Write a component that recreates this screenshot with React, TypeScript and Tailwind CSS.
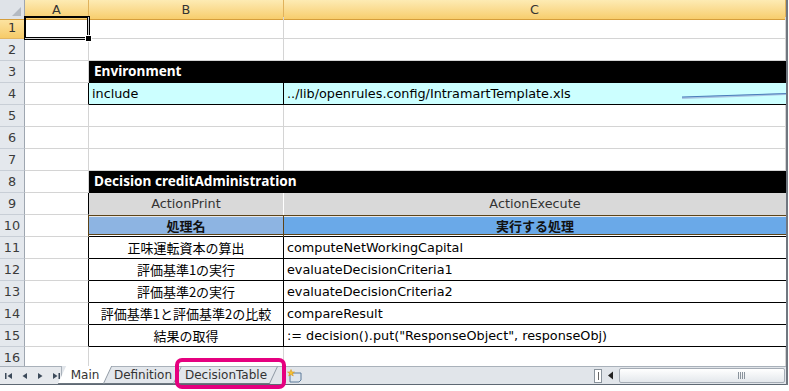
import React from 'react'

const GRID = 'grid grid-cols-[25px_64px_195px_502px]'
const GL = 'border-r border-b border-r-[#d4d4d4] border-b-[#d4d4d4]'
// Meiryo-like latin text, Japanese falls through to Noto CJK
const LATIN = 'font-[DejaVu_Sans,Noto_Sans_CJK_JP,sans-serif] text-[12.8px]'
const BOLD = 'font-[Noto_Sans,Noto_Sans_CJK_JP,sans-serif] text-[13.6px] font-bold'
const JP = 'font-[Noto_Sans_CJK_JP,sans-serif] text-[13px]'

type RowProps = {
  n: number
  selected?: boolean
  children?: React.ReactNode
  aCls?: string
}

function RowHead({ n, selected }: { n: number; selected?: boolean }) {
  return (
    <div
      className={
        'flex items-center justify-center border-r border-b ' +
        LATIN +
        (selected
          ? ' bg-gradient-to-b from-[#fde7a9] to-[#f6cb68] border-r-[#d9a441] border-b-[#e3b662] text-[#333]'
          : ' bg-[#e4e8ed] border-r-[#9ea6b0] border-b-[#c8ced6] text-[#3b3b3b]')
      }
    >
      {n}
    </div>
  )
}

function Row({ n, selected, children, aCls }: RowProps) {
  return (
    <div className={GRID + ' h-[22px]'}>
      <RowHead n={n} selected={selected} />
      <div className={'border-r border-b border-b-[#d4d4d4] ' + (aCls ?? 'border-r-[#d4d4d4]')} />
      {children ?? (
        <>
          <div className={GL} />
          <div className={GL} />
        </>
      )}
    </div>
  )
}

const tableRows = [
  { n: 11, b: '正味運転資本の算出', c: 'computeNetWorkingCapital' },
  { n: 12, b: '評価基準1の実行', c: 'evaluateDecisionCriteria1' },
  { n: 13, b: '評価基準2の実行', c: 'evaluateDecisionCriteria2' },
  { n: 14, b: '評価基準1と評価基準2の比較', c: 'compareResult' },
  { n: 15, b: '結果の取得', c: ':= decision().put("ResponseObject", responseObj)' },
]

function ColHead({ label }: { label: string }) {
  return (
    <div className={'flex items-center justify-center bg-gradient-to-b from-[#fdebb3] to-[#f7cd6c] border-r border-b border-r-[#e0b25c] border-b-[#d59e3c] text-[#333] ' + LATIN}>
      {label}
    </div>
  )
}

function Tab({ label, active, w }: { label: string; active?: boolean; w: string }) {
  return (
    <div className={'relative h-full flex items-center justify-center ' + w + (active ? ' z-10' : '')}>
      <div
        className={
          'absolute inset-0 -skew-x-[25deg] border-r border-b ' +
          (active
            ? 'bg-white border-r-[#8e98a3] border-b-[#6d7780]'
            : 'bg-[#e3e7ec] border-r-[#8e98a3] border-b-[#6d7780] border-t border-t-[#a9b1ba]')
        }
      />
      <span className="relative font-[DejaVu_Sans,sans-serif] text-[12px] text-[#333] leading-none">{label}</span>
    </div>
  )
}

export default function App() {
  return (
    <div className="relative w-[789px] h-[391px] bg-white overflow-hidden font-[DejaVu_Sans,Noto_Sans_CJK_JP,sans-serif]">
      <div className="w-[788px] h-[385px] border-r-2 border-r-[#707780] flex flex-col">
        <div className="relative h-[366px] overflow-hidden">
          {/* column headers */}
          <div className={GRID + ' h-[17px]'}>
            <div className="relative bg-[#dfe3e8] border-r border-b border-r-[#9ea6b0] border-b-[#d59e3c]">
              <svg className="absolute right-[3px] bottom-[3px]" width="9" height="9" viewBox="0 0 9 9">
                <path d="M9 0 L9 9 L0 9 Z" fill="#b4bac2" />
              </svg>
            </div>
            <ColHead label="A" />
            <ColHead label="B" />
            <ColHead label="C" />
          </div>

          {/* row 1 with selected A1 */}
          <div className={GRID + ' h-[22px]'}>
            <RowHead n={1} selected />
            <div className="relative border-r border-b border-r-[#d4d4d4] border-b-[#d4d4d4] shadow-[0_0_0_1px_#000,inset_0_0_0_1px_#000]">
              <div className="absolute -right-[3px] -bottom-[3px] w-[5px] h-[5px] bg-black outline outline-1 outline-white" />
            </div>
            <div className={GL} />
            <div className={GL} />
          </div>
          <Row n={2} />
          <Row n={3}>
            <div className={'col-span-2 bg-black border-b border-b-black flex items-center pl-[5px] text-white ' + BOLD}>
              Environment
            </div>
          </Row>
          <Row n={4} aCls="border-r-black">
            <div className={'bg-[#ccffff] border-r border-b border-black flex items-center pl-[3px] text-black ' + LATIN}>include</div>
            <div className={'bg-[#ccffff] border-b border-b-black flex items-center pl-[3px] text-black ' + LATIN}>
              ../lib/openrules.config/IntramartTemplate.xls
            </div>
          </Row>
          <Row n={5} />
          <Row n={6} />
          <Row n={7} />
          <Row n={8}>
            <div className={'col-span-2 bg-black border-b border-b-black flex items-center pl-[5px] text-white ' + BOLD}>
              Decision creditAdministration
            </div>
          </Row>
          <Row n={9} aCls="border-r-black">
            <div className={'bg-[#d9d9d9] border-r border-r-white flex items-center justify-center text-[#333] ' + LATIN}>ActionPrint</div>
            <div className={'bg-[#d9d9d9] flex items-center justify-center text-[#333] ' + LATIN}>ActionExecute</div>
          </Row>
          <Row n={10} aCls="border-r-[#5c4318]">
            <div className={'bg-[#8db4e2] border-r border-r-[#5c4318] shadow-[inset_0_1px_0_#5c4318,inset_0_2px_0_#e8e8e8,inset_0_-1px_0_#000,inset_0_-2px_0_#fff,inset_0_-3px_0_#5c4318] flex items-center justify-center font-bold text-[#111] ' + JP}>
              処理名
            </div>
            <div className={'bg-[#6aa9e8] shadow-[inset_0_1px_0_#5c4318,inset_0_2px_0_#e8e8e8,inset_0_-1px_0_#000,inset_0_-2px_0_#fff,inset_0_-3px_0_#5c4318] flex items-center justify-center font-bold text-[#111] ' + JP}>
              実行する処理
            </div>
          </Row>
          {tableRows.map((r) => (
            <Row key={r.n} n={r.n} aCls="border-r-black">
              <div className={'bg-white border-r border-b border-black flex items-center justify-center text-black whitespace-nowrap ' + JP}>{r.b}</div>
              <div className={'bg-white border-b border-b-black flex items-center pl-[3px] text-black whitespace-nowrap ' + LATIN}>{r.c}</div>
            </Row>
          ))}
          <Row n={16} />

          {/* drawing line in row 4 */}
          <svg className="absolute left-[682px] top-[91px]" width="106" height="9" viewBox="0 0 106 9">
            <line x1="0" y1="7" x2="106" y2="3" stroke="#a9c4e2" strokeWidth="2" />
            <line x1="0" y1="6" x2="106" y2="2.5" stroke="#4a7ebb" strokeWidth="1" />
          </svg>
        </div>

        {/* sheet tab strip */}
        <div className="relative flex h-[19px] bg-[#e1e5ea] border-b border-b-[#5e6873]">
          <div className="w-[62px] h-full flex items-center gap-[9px] pl-[5px] border-t border-r border-t-[#a9b1ba] border-r-[#a9b1ba] bg-[#e6e9ed]">
            <svg width="8" height="8" viewBox="0 0 8 8"><rect x="0" y="1" width="1.5" height="6" fill="#3c4a5a" /><path d="M7 1 L2.5 4 L7 7 Z" fill="#3c4a5a" /></svg>
            <svg width="6" height="8" viewBox="0 0 6 8"><path d="M5 1 L0.5 4 L5 7 Z" fill="#3c4a5a" /></svg>
            <svg width="6" height="8" viewBox="0 0 6 8"><path d="M1 1 L5.5 4 L1 7 Z" fill="#3c4a5a" /></svg>
            <svg width="8" height="8" viewBox="0 0 8 8"><path d="M1 1 L5.5 4 L1 7 Z" fill="#3c4a5a" /><rect x="6.5" y="1" width="1.5" height="6" fill="#3c4a5a" /></svg>
          </div>
          <div className="flex h-full">
            <Tab label="Main" active w="w-[46px]" />
            <Tab label="Definition" w="w-[70px]" />
            <Tab label="DecisionTable" w="w-[96px]" />
          </div>
          <div className="flex items-center pl-[13px] border-t border-t-[#a9b1ba] w-[320px]">
            <svg width="17" height="14" viewBox="0 0 17 14">
              <path d="M3 4 H14 V11 L12 13 H3 Z" fill="#dfe6ee" stroke="#5c7a99" strokeWidth="1" />
              <path d="M4 0.5 L5 3 L7.5 3 L5.5 4.5 L6.3 7 L4 5.5 L1.7 7 L2.5 4.5 L0.5 3 L3 3 Z" fill="#f5c233" stroke="#d08a12" strokeWidth="0.5" />
            </svg>
          </div>
          <div className="flex items-center border-t border-t-[#a9b1ba] flex-1 gap-[5px]">
            <div className="w-[8px] h-[14px] border border-[#8a939c] bg-white flex items-center justify-center">
              <div className="w-px h-[8px] bg-[#666]" />
            </div>
            <svg width="7" height="9" viewBox="0 0 7 9"><path d="M6 0.5 L1 4.5 L6 8.5 Z" fill="#222" /></svg>
            <div className="flex-1 h-[15px] mr-[1px] rounded-[2px] border border-[#a5acb5] bg-gradient-to-b from-white to-[#e4e8ec] flex items-center justify-end pr-[39px]">
              <div className="flex gap-[1px]">
                <div className="w-px h-[7px] bg-[#8a939c]" />
                <div className="w-px h-[7px] bg-[#8a939c]" />
                <div className="w-px h-[7px] bg-[#8a939c]" />
                <div className="w-px h-[7px] bg-[#8a939c]" />
              </div>
            </div>
          </div>
        </div>
      </div>

      {/* highlight around DecisionTable tab */}
      <div className="absolute left-[175px] top-[358px] w-[111px] h-[31px] rounded-[7px] border-4 border-[#e5007f]" />
    </div>
  )
}
